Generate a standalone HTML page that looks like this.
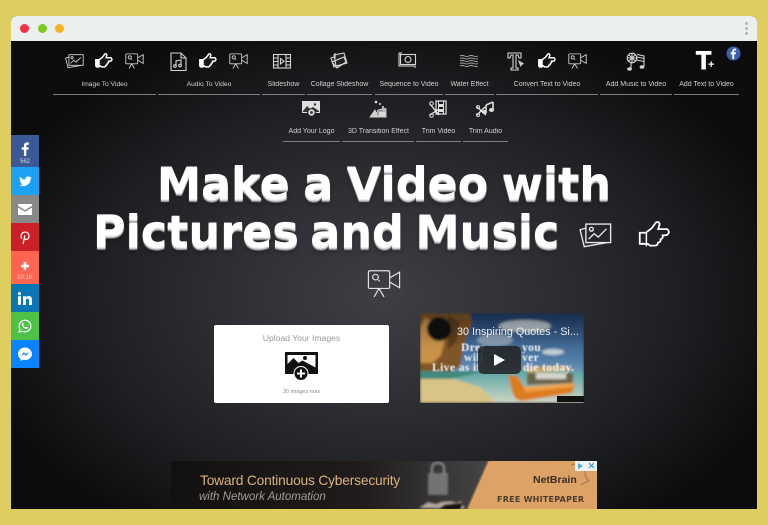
<!DOCTYPE html>
<html><head><meta charset="utf-8"><title>Make a Video</title>
<style>
html,body{margin:0;padding:0;width:768px;height:525px;overflow:hidden;background:#e0cd5f;font-family:"Liberation Sans",sans-serif}
*{box-sizing:border-box}
#win{position:absolute;left:11px;top:16px;width:746px;height:493px;border-radius:6px 6px 0 0;overflow:hidden;background:#0c0c0d}
#bar{position:absolute;left:11px;top:16px;width:746px;height:25px;background:#eceff0;border-radius:6px 6px 0 0}
.dot{position:absolute;width:9px;height:9px;border-radius:50%;top:24px}
#bg{position:absolute;left:11px;top:41px;width:746px;height:468px;background:radial-gradient(ellipse 420px 285px at 373px 255px,#3d3f45 0%,#2f3035 35%,#1e1f22 70%,#0c0c0d 100%)}
.lb{position:absolute;height:10px;line-height:10px;font-size:7px;color:#d0d0d0;text-align:center;white-space:nowrap;filter:blur(.2px)}
.ln{position:absolute;height:1px;background:#7d7e80}
svg.i{position:absolute;overflow:visible;fill:none;stroke:#d4d4d4;stroke-width:1.1;filter:blur(.2px)}
h1{position:absolute;margin:0;left:11px;width:746px;text-align:center;font-family:"DejaVu Sans",sans-serif;font-weight:700;font-size:44.5px;line-height:48px;color:#fff;white-space:nowrap;text-shadow:0 1px 0 #eee,0 2px 0 #ccc,0 3px 1px #aaa,0 5px 4px rgba(0,0,0,.3);filter:blur(.35px)}
.s{position:absolute;left:11px;width:28px;color:#fff;text-align:center}
.s svg{position:absolute}
.s span{position:absolute;left:0;width:28px;font-size:6px;line-height:7px;color:#d5d5d5;text-align:center}
</style></head><body>
<svg width="0" height="0" style="position:absolute">
<defs>
<symbol id="pic" viewBox="0 0 24 20"><path d="M5 2h18v13.500H5z"/><path d="M5 5 .8 6.200l3 12.300 16.700-3"/><circle cx="9" cy="5.800" r="1.400"/><path d="M7 13l4-4 3 2.500 6-6"/></symbol>
<symbol id="cam" viewBox="0 0 24 20"><rect x="1" y="1" width="15" height="12.500" rx="1"/><path d="M16 6l7-4v11l-7-4"/><circle cx="6" cy="5.500" r="2"/><path d="M8 7.500l1 1M8.500 13.500 5 19.500M8.500 13.500l3.500 6"/></symbol>
<symbol id="hand" viewBox="0 0 22 19"><path fill="#141415" stroke-width="1.800" d="M1 8h4l4-3 3-4q2-1 2.500 1l-1 3.500h6q2.500 2 0 4l-3 .3q.6 2-1.400 2.600.3 2-1.800 2.300 0 2-2 2H8l-1.500-1.200H1z"/><path fill="currentColor" stroke="none" d="M1 8h4.800v9.600H1z"/></symbol>
</defs></svg>

<div id="win"></div><div id="bg"></div><div id="bar"></div>
<div class="dot" style="left:20px;background:#f5303f"></div>
<div class="dot" style="left:38px;background:#7fc91f"></div>
<div class="dot" style="left:55px;background:#f8b21b"></div>
<div style="position:absolute;left:745px;top:22px;width:3px;height:3px;border-radius:50%;background:#b4baa9;box-shadow:0 5px 0 #b4baa9,0 10px 0 #b4baa9"></div>

<!-- row 1 icons -->
<svg class="i" style="left:65px;top:53px" width="19" height="16"><use href="#pic"/></svg>
<svg class="i" style="left:95px;top:53px;color:#fff;stroke:#fff" width="18" height="16"><use href="#hand"/></svg>
<svg class="i" style="left:125px;top:53px" width="19" height="16"><use href="#cam"/></svg>
<svg class="i" style="left:170px;top:52px" width="17" height="19" viewBox="0 0 17 19"><path d="M1 1h10l5 5v12.500H1z"/><path d="M11 1v5h5"/><path d="M6 14V9l5-1v5"/><circle cx="5" cy="14" r="1.300"/><circle cx="10" cy="13.500" r="1.300"/></svg>
<svg class="i" style="left:199px;top:53px;color:#fff;stroke:#fff" width="18" height="16"><use href="#hand"/></svg>
<svg class="i" style="left:229px;top:53px" width="19" height="16"><use href="#cam"/></svg>
<svg class="i" style="left:273px;top:54px" width="19" height="15" viewBox="0 0 19 15"><rect x=".5" y=".5" width="17" height="13.500"/><path d="M5 .5V14M13 .5V14M.5 4H5M.5 7.500H5M.5 11H5M13 4h4.500M13 7.500h4.500M13 11h4.500"/><path d="M7.500 4.500l3.500 2.700-3.500 2.700z"/></svg>
<svg class="i" style="left:330px;top:52px" width="19" height="18" viewBox="0 0 19 18"><path fill="#222" d="M1 6l12-4 3 9-12 4z"/><path fill="#222" d="M4 3l10-2 3 10-11 3z"/><path d="M2 10l12-5 2 5-9 6zM5 1v6"/></svg>
<svg class="i" style="left:398px;top:52px" width="20" height="18" viewBox="0 0 20 18"><path d="M1 1v13h16v2"/><rect x="2.500" y="2.500" width="15" height="10"/><circle cx="10" cy="7.500" r="3"/><path d="M1 1h3"/></svg>
<svg class="i" style="left:460px;top:55px;stroke-width:.9;stroke:#a8a8a8" width="18" height="13" viewBox="0 0 18 13"><path d="M0 1q2-1 4.500 0t4.500 0 4.500 0 4.500 0M0 3.500q2-1 4.500 0t4.500 0 4.500 0 4.500 0M0 6q2-1 4.500 0t4.500 0 4.500 0 4.500 0M0 8.500q2-1 4.500 0t4.500 0 4.500 0 4.500 0M0 11q2-1 4.500 0t4.500 0 4.500 0 4.500 0"/></svg>
<svg class="i" style="left:507px;top:52px" width="19" height="19" viewBox="0 0 19 19"><path d="M1 1h13v5h-2l-1-3H9v13h2v2H4v-2h2V3H4L3 6H1z"/><path fill="#ccc" stroke="none" d="M11 8l6 3.500-2 1.500-1.500 2z"/></svg>
<svg class="i" style="left:538px;top:53px;color:#fff;stroke:#fff" width="18" height="16"><use href="#hand"/></svg>
<svg class="i" style="left:568px;top:53px" width="19" height="16"><use href="#cam"/></svg>
<svg class="i" style="left:626px;top:52px" width="19" height="19" viewBox="0 0 19 19"><circle cx="6" cy="6" r="4.800"/><path d="M6 1v10M1 6h10M2.500 2.500l7 7M9.500 2.500l-7 7"/><path d="M11 2.500l7 1.500v2.500l-7-1.500M11 8l7 1.500M18 4v10M5 11v6"/><ellipse cx="3.500" cy="17" rx="1.800" ry="1.200" fill="#cfcfcf"/><ellipse cx="16" cy="15" rx="1.800" ry="1.200" fill="#cfcfcf"/></svg>
<div style="position:absolute;left:696px;top:49px;font:700 25px/25px 'Liberation Sans',sans-serif;color:#fff;-webkit-text-stroke:.9px #fff;filter:blur(.2px)">T</div>
<div style="position:absolute;left:708px;top:60px;font:700 11px/11px 'Liberation Sans',sans-serif;color:#fff">+</div>
<svg style="position:absolute;left:726px;top:46px" width="15" height="15" viewBox="0 0 15 15"><circle cx="7.500" cy="7.500" r="7" fill="#3b5fb0"/><path fill="#fff" d="M8.200 13V8.300h1.600l.3-1.900H8.200V5.300c0-.6.200-.9.900-.9h1V2.700c-.3 0-.8-.1-1.400-.1-1.500 0-2.400.9-2.400 2.500v1.300H4.700v1.900h1.600V13z"/></svg>

<!-- row 2 icons -->
<svg class="i" style="left:302px;top:100px;stroke:none" width="18" height="17" viewBox="0 0 18 17"><rect x="0" y="1" width="18" height="12" fill="#dedede"/><path d="M1 11l4-5 3 3 3-2 6 4v1H1z" fill="#333"/><circle cx="13" cy="4.500" r="1.200" fill="#333"/><circle cx="9.500" cy="12.500" r="3.800" fill="#dedede" stroke="#222"/><circle cx="9.500" cy="12.500" r="1.500" fill="#444"/></svg>
<svg class="i" style="left:369px;top:100px;stroke-width:.9" width="18" height="18" viewBox="0 0 18 18"><path d="M6 17l3-7 4-1h4v8z" fill="#888"/><path d="M1 17l5-7 3 7z" fill="#cfcfcf"/><rect x="10" y="12" width="6" height="4" fill="#ddd"/><circle cx="7" cy="2" r="1.300" fill="#ddd" stroke="none"/><circle cx="11" cy="4" r="1" fill="#ddd" stroke="none"/><circle cx="14" cy="7" r="1" fill="#ddd" stroke="none"/><rect x="13" y="8" width="4" height="3" fill="#bbb" stroke="none"/></svg>
<svg class="i" style="left:429px;top:100px" width="18" height="18" viewBox="0 0 18 18"><rect x="7" y="1" width="10" height="13" fill="#111" stroke="#ddd" stroke-width="1.300"/><path d="M9.500 1v13M14.500 1v13" stroke="#ddd"/><rect x="9.500" y="4" width="5" height="3" fill="#ddd" stroke="none"/><rect x="9.500" y="9" width="5" height="3" fill="#ddd" stroke="none"/><path d="M1 4l9 11M10 9l-9 6" stroke="#eee" stroke-width="1.300"/><circle cx="2.500" cy="15.500" r="1.800"/><circle cx="2.500" cy="3.500" r="1.800"/></svg>
<svg class="i" style="left:476px;top:101px" width="18" height="16" viewBox="0 0 18 16"><path d="M10 4v7M17 1v8M10 4l7-3" stroke-width="1.600" stroke="#ddd"/><ellipse cx="8.500" cy="11" rx="2" ry="1.500" fill="#ddd"/><ellipse cx="15.500" cy="9" rx="2" ry="1.500" fill="#ddd"/><path d="M1 6l9 8M9 6l-8 8" stroke="#eee" stroke-width="1.300"/><circle cx="2" cy="6" r="1.500"/><circle cx="2" cy="14" r="1.500"/></svg>

<!-- labels row 1 -->
<div class="lb" style="left:53px;top:80px;width:103px;font-size:6.700px">Image To Video</div><div class="ln" style="left:53px;top:94px;width:103px"></div>
<div class="lb" style="left:158px;top:80px;width:102px;font-size:6.700px">Audio To Video</div><div class="ln" style="left:158px;top:94px;width:102px"></div>
<div class="lb" style="left:262px;top:80px;width:43px">Slideshow</div><div class="ln" style="left:262px;top:94px;width:43px"></div>
<div class="lb" style="left:307px;top:80px;width:65px">Collage Slideshow</div><div class="ln" style="left:307px;top:94px;width:65px"></div>
<div class="lb" style="left:375px;top:80px;width:68px">Sequence to Video</div><div class="ln" style="left:375px;top:94px;width:68px"></div>
<div class="lb" style="left:445px;top:80px;width:49px">Water Effect</div><div class="ln" style="left:445px;top:94px;width:49px"></div>
<div class="lb" style="left:496px;top:80px;width:102px">Convert Text to Video</div><div class="ln" style="left:496px;top:94px;width:102px"></div>
<div class="lb" style="left:600px;top:80px;width:72px">Add Music to Video</div><div class="ln" style="left:600px;top:94px;width:72px"></div>
<div class="lb" style="left:674px;top:80px;width:65px">Add Text to Video</div><div class="ln" style="left:674px;top:94px;width:65px"></div>
<!-- labels row 2 -->
<div class="lb" style="left:283px;top:127px;width:57px">Add Your Logo</div><div class="ln" style="left:283px;top:141px;width:57px"></div>
<div class="lb" style="left:342px;top:127px;width:73px">3D Transition Effect</div><div class="ln" style="left:342px;top:141px;width:72px"></div>
<div class="lb" style="left:416px;top:127px;width:45px">Trim Video</div><div class="ln" style="left:416px;top:141px;width:45px"></div>
<div class="lb" style="left:463px;top:127px;width:45px">Trim Audio</div><div class="ln" style="left:463px;top:141px;width:45px"></div>

<h1 style="top:161px;word-spacing:-2px">Make a Video with</h1>
<h1 style="top:209px;left:93px;width:auto;word-spacing:-4px">Pictures and Music</h1>
<svg class="i" style="left:579px;top:221px;stroke-width:1;stroke:#e4e4e4" width="33" height="28"><use href="#pic"/></svg>
<svg class="i" style="left:638px;top:221px;stroke:#fff" width="33" height="28" viewBox="0 0 22 19"><path stroke-width="1.200" d="M1 8h4l4-3 3-4q2-1 2.500 1l-1 3.500h6q2.500 2 0 4l-3 .3q.6 2-1.400 2.600.3 2-1.800 2.300 0 2-2 2H8l-1.500-1.200H1z"/><path stroke-width="1" d="M5.500 8.200v9"/><circle cx="3" cy="15.500" r=".8" fill="#fff" stroke="none"/></svg>
<svg class="i" style="left:367px;top:269px;stroke-width:.85;stroke:#e0e0e0" width="34" height="29"><use href="#cam"/></svg>

<!-- upload -->
<div style="position:absolute;left:214px;top:325px;width:175px;height:78px;background:#fff;border-radius:2px"></div>
<div style="position:absolute;left:214px;top:333px;width:175px;text-align:center;font-size:8.600px;line-height:11px;color:#9a9a9a;filter:blur(.25px)">Upload Your Images</div>
<svg style="position:absolute;left:285px;top:352px" width="33" height="30" viewBox="0 0 33 30"><rect x="0" y="0" width="33" height="22" fill="#111"/><path d="M2.500 12l6-6 5 5 4-2.500 13 7V3H2.500z" fill="#fff"/><circle cx="20" cy="6" r="2" fill="#111"/><circle cx="16" cy="21.500" r="7" fill="#111" stroke="#fff" stroke-width="1"/><path d="M16 17.500v8M12 21.500h8" stroke="#fff" stroke-width="2"/></svg>
<div style="position:absolute;left:214px;top:388px;width:175px;text-align:center;font-size:5.500px;line-height:8px;color:#8c8c8c">30 images max</div>

<!-- video -->
<svg style="position:absolute;left:420px;top:313px" width="164" height="90" viewBox="0 0 164 90">
<defs><linearGradient id="sky" x1="0" y1="0" x2="0" y2="1"><stop offset="0" stop-color="#22406e"/><stop offset=".5" stop-color="#4f7ba6"/><stop offset="1" stop-color="#b9ccd6"/></linearGradient>
<linearGradient id="sea" x1="0" y1="0" x2="0" y2="1"><stop offset="0" stop-color="#5aa5a5"/><stop offset="1" stop-color="#cfd6c4"/></linearGradient>
<linearGradient id="shade" x1="0" y1="0" x2="0" y2="1"><stop offset="0" stop-color="#000" stop-opacity=".3"/><stop offset=".4" stop-color="#000" stop-opacity="0"/></linearGradient>
<filter id="b1" x="-5%" y="-5%" width="110%" height="110%"><feGaussianBlur stdDeviation="1.200"/></filter></defs>
<g filter="url(#b1)">
<rect width="164" height="90" fill="url(#sky)"/>
<ellipse cx="105" cy="13" rx="26" ry="6" fill="#b8c3cb"/><ellipse cx="75" cy="27" rx="18" ry="6" fill="#8a9fb3"/><ellipse cx="133" cy="39" rx="11" ry="3" fill="#c2cdd3"/>
<rect y="58" width="164" height="32" fill="url(#sea)"/>
<path d="M0 0h50l2 10-6 14-3 14-3 16-12 5H0z" fill="#7f5626"/>
<path d="M5 5l10 4 3 14 7 3-4 16-8 8H0V14z" fill="#c9924a"/><path d="M28 2l12 7-4 20-8 8z" fill="#5a3d1f"/>
<path d="M0 58h64q-20 6-35 8H0z" fill="#3f8a7e"/>
<path d="M0 66h34l26 8 16 16H0z" fill="#d9c487"/>
<path d="M88 62l9 1 8 13 50-5-3 9-50 8q-7-1-9-7z" fill="#dd7c1c"/>
<path d="M104 74l50-4-1 4-48 5z" fill="#f0a34a"/>
<path d="M107 60h46v10l-46 2z" fill="#6c6048"/><path d="M106 54l38-1 10 4-46 3z" fill="#c6a869"/><rect x="116" y="60" width="30" height="6" fill="#d8d6cc"/>
<circle cx="19" cy="16" r="12" fill="#0e1012"/>
<rect width="164" height="90" fill="url(#shade)"/>
</g>
<rect x="137" y="83" width="27" height="6" fill="#111"/>
<text x="37" y="22" font-family="Liberation Sans,sans-serif" font-size="10.800" fill="#eee" style="filter:blur(.3px)">30 Inspiring Quotes - Si...</text>
<g font-family="Liberation Serif,serif" font-weight="700" font-size="11.500" fill="#f4f4f4" letter-spacing=".4" style="filter:blur(.4px)"><text x="41" y="38">Drec</text><text x="102" y="38">you</text><text x="44" y="48">will</text><text x="102" y="48">ver</text><text x="12" y="58">Live as if</text><text x="103" y="58">die today.</text></g>
<rect x="58" y="33" width="43" height="28" rx="5" fill="#212121" opacity=".85"/>
<path d="M74 41l11 6-11 6z" fill="#fff"/>
</svg>

<!-- ad -->
<svg style="position:absolute;left:171px;top:461px" width="426" height="48" viewBox="0 0 426 48">
<defs><linearGradient id="ad" x1="0" x2="1"><stop offset="0" stop-color="#131110"/><stop offset=".45" stop-color="#1f1c1b"/><stop offset=".78" stop-color="#4b4a4b"/></linearGradient></defs>
<rect width="426" height="48" fill="url(#ad)"/>
<path d="M317 0h109v48H296z" fill="#dca266"/>
<path d="M317 0l-21 48" stroke="#82684a" stroke-width="1.500"/>
<g style="filter:blur(1px)"><rect x="257" y="12" width="20" height="22" fill="#8b8e90" opacity=".7"/><path d="M261 13V7q0-5 6-5t6 5v6" fill="none" stroke="#999" stroke-width="2.500" opacity=".8"/>
<path d="M248 47l9-6 8 2 5-2 10-1 6 2 4-2 4 8z" fill="#b5a89c"/><path d="M268 48l6-4 18-2-3 6z" fill="#141110"/></g>
<text x="29" y="24" font-family="Liberation Sans,sans-serif" font-size="13.800" fill="#d9b27e" letter-spacing="-.2">Toward Continuous Cybersecurity</text>
<text x="28" y="39" font-family="Liberation Sans,sans-serif" font-style="italic" font-size="11.500" fill="#a39c94">with Network Automation</text>
<text x="326" y="41" font-family="DejaVu Sans,sans-serif" font-weight="700" font-size="8" fill="#4c3d2c" letter-spacing=".25">FREE WHITEPAPER</text>
<text x="362" y="22" font-family="Liberation Sans,sans-serif" font-weight="700" font-size="10.500" fill="#3a2e22">NetBrain</text>
<path d="M400 4q8-3 12 3 3 3 2 8l4 5-5 2-3 2" fill="none" stroke="#8d6f4e" stroke-width=".8"/>
<rect x="404" y="0" width="22" height="10" fill="#eef2f3"/><path d="M407 2l5 3-5 3z" fill="#3fb1e0"/><path d="M418 2l5 5m0-5l-5 5" stroke="#3b8bc7" stroke-width="1"/>
</svg>

<!-- social -->
<div class="s" style="top:135px;height:32px;background:#3b5998"><svg style="left:9px;top:7px" width="10" height="14" viewBox="0 0 12 17"><path fill="#fff" d="M7.600 17V9.400h2.600l.4-3H7.600V4.700c0-.9.300-1.400 1.500-1.400h1.600V.6C10.400.5 9.500.4 8.500.4 6.200.4 4.700 1.800 4.700 4.300v2.100H2v3h2.700V17z"/></svg><span style="top:24px">562</span></div>
<div class="s" style="top:167px;height:28px;background:#1da1f2"><svg style="left:8px;top:9px" width="13" height="11" viewBox="0 0 16 14"><path fill="#fff" d="M16 2a6.500 6.500 0 0 1-1.900.5A3.300 3.300 0 0 0 15.500.7c-.6.400-1.300.6-2.100.8A3.300 3.300 0 0 0 7.800 4.500 9.300 9.300 0 0 1 1.100.9 3.300 3.300 0 0 0 2.100 5.300a3.300 3.300 0 0 1-1.500-.4c0 1.600 1.100 2.900 2.600 3.200a3.300 3.300 0 0 1-1.500.1c.4 1.300 1.600 2.200 3.100 2.300A6.600 6.600 0 0 1 0 11.400 9.300 9.300 0 0 0 14.400 3.500c.6-.4 1.200-.9 1.600-1.500z"/></svg></div>
<div class="s" style="top:195px;height:28px;background:#888"><svg style="left:7px;top:9px" width="14" height="11" viewBox="0 0 14 11"><path fill="#fff" d="M0 0h14v1.800L7 6 0 1.800zM0 3.500l7 4.200 7-4.200V11H0z"/></svg></div>
<div class="s" style="top:223px;height:28px;background:#cb2027"><svg style="left:8px;top:8px" width="12" height="14" viewBox="0 0 12 16"><path fill="none" stroke="#fff" stroke-width="1.400" d="M2.300 8.800C.8 6.500 1.500 1.200 6.300 1.200c4.600 0 5.300 5.700 2.700 7.900-1.500 1.200-3.200.3-3.200-.8M5.800 4.800 3.800 15"/></svg></div>
<div class="s" style="top:251px;height:33px;background:#ff6550"><svg style="left:9px;top:10px" width="10" height="10" viewBox="0 0 11 11"><path d="M5.500 1v9M1 5.500h9" stroke="#fff" stroke-width="2.800"/></svg><span style="top:24px;color:#ffd8d0">10.1K</span></div>
<div class="s" style="top:284px;height:28px;background:#0976b4"><svg style="left:7px;top:8px" width="14" height="13" viewBox="0 0 14 13"><path fill="#fff" d="M0 4.200h3V13H0zM1.500 0a1.600 1.600 0 1 1 0 3.200 1.600 1.600 0 0 1 0-3.200zM5 4.200h2.800v1.300C8.300 4.600 9.300 4 10.700 4 13.200 4 14 5.600 14 8v5h-3V8.600c0-1.100-.3-2-1.500-2-1.300 0-1.600 1-1.600 2V13H5z"/></svg></div>
<div class="s" style="top:312px;height:28px;background:#4dc247"><svg style="left:7px;top:7px" width="14" height="14" viewBox="0 0 14 14"><path fill="none" stroke="#fff" stroke-width="1.200" d="M1 13l.9-3.200A5.800 5.800 0 1 1 4.200 12.100z"/><path fill="#fff" d="M5 3.800c.5 0 .8 1.400.7 1.700l-.5.700c.5 1 1.200 1.700 2.300 2.300l.7-.7c.4-.2 1.700.5 1.700.8 0 1-.9 1.500-1.700 1.400-2.400-.4-4.100-2.300-4.400-4.400C3.700 4.800 4.200 3.800 5 3.800z"/></svg></div>
<div class="s" style="top:340px;height:28px;background:#0a84ff"><svg style="left:7px;top:7px" width="14" height="14" viewBox="0 0 14 14"><path fill="#fff" d="M7 .5C3.100.5 0 3.400 0 7c0 2 1 3.800 2.500 5v2l2.300-1.200c.7.200 1.400.3 2.200.3 3.900 0 7-2.900 7-6.100S10.900.5 7 .5z"/><path fill="#0a84ff" d="M2.800 9l3-3.700 2 1.700 3.400-1.900-3 3.800-2-1.800z"/></svg></div>
</body></html>
